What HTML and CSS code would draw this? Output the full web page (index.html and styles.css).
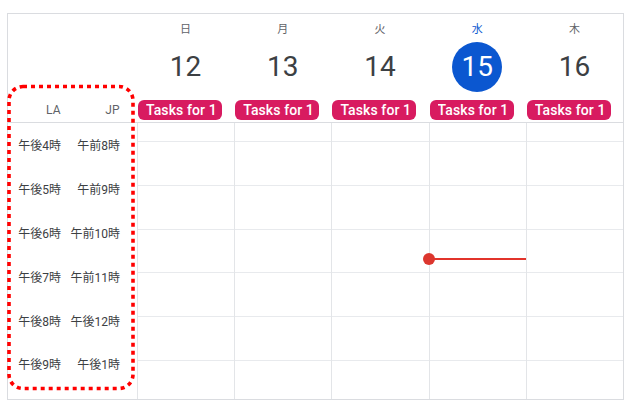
FILE: index.html
```html
<!DOCTYPE html>
<html lang="ja">
<head>
    <meta charset="UTF-8">
    <meta name="viewport" content="width=device-width, initial-scale=1.0">
    <title>Week view</title>
    <link rel="stylesheet" href="styles.css">
</head>
<body>
<div class="calendar">
    <!-- Day headers -->
    <div class="head">
        <div class="zones"><span>LA</span><span>JP</span></div>
        <div class="day">
            <span class="dow">日</span>
            <span class="date">12</span>
            <span class="chip"><span>Tasks for 10月12日</span></span>
        </div>
        <div class="day">
            <span class="dow">月</span>
            <span class="date">13</span>
            <span class="chip"><span>Tasks for 10月13日</span></span>
        </div>
        <div class="day">
            <span class="dow">火</span>
            <span class="date">14</span>
            <span class="chip"><span>Tasks for 10月14日</span></span>
        </div>
        <div class="day today">
            <span class="dow">水</span>
            <span class="date">15</span>
            <span class="chip"><span>Tasks for 10月15日</span></span>
        </div>
        <div class="day">
            <span class="dow">木</span>
            <span class="date">16</span>
            <span class="chip"><span>Tasks for 10月16日</span></span>
        </div>
    </div>

    <!-- Time grid -->
    <div class="grid">
        <div class="gutter">
            <div class="hour"><span>午後4時</span><span>午前8時</span></div>
            <div class="hour"><span>午後5時</span><span>午前9時</span></div>
            <div class="hour"><span>午後6時</span><span>午前10時</span></div>
            <div class="hour"><span>午後7時</span><span>午前11時</span></div>
            <div class="hour"><span>午後8時</span><span>午後12時</span></div>
            <div class="hour"><span>午後9時</span><span>午後1時</span></div>
        </div>
        <div class="col">
            <div class="slot first"></div><div class="slot"></div><div class="slot"></div>
            <div class="slot"></div><div class="slot"></div><div class="slot"></div>
        </div>
        <div class="col">
            <div class="slot first"></div><div class="slot"></div><div class="slot"></div>
            <div class="slot"></div><div class="slot"></div><div class="slot"></div>
        </div>
        <div class="col">
            <div class="slot first"></div><div class="slot"></div><div class="slot"></div>
            <div class="slot"></div><div class="slot"></div><div class="slot"></div>
        </div>
        <div class="col">
            <div class="slot first"></div><div class="slot"></div><div class="slot"></div>
            <div class="slot"></div><div class="slot"></div><div class="slot"></div>
            <div class="now"><span class="now-dot"></span></div>
        </div>
        <div class="col">
            <div class="slot first"></div><div class="slot"></div><div class="slot"></div>
            <div class="slot"></div><div class="slot"></div><div class="slot"></div>
        </div>
    </div>
</div>

<!-- Highlight around the time zone column -->
<svg class="highlight" width="134" height="312" viewBox="0 0 134 312">
    <rect x="4" y="4.5" width="124" height="302" rx="14" ry="14"
          fill="none" stroke="#ff0000" stroke-width="3.6" stroke-dasharray="4 4"/>
</svg>
</body>
</html>
```

FILE: styles.css
```css
body {
    margin: 0;
    background: #fff;
    font-family: Roboto, "Noto Sans CJK JP", sans-serif;
    color: #3c4043;
}
.calendar {
    box-sizing: border-box;
    width: 617px;
    height: 387px;
    margin: 13px 0 0 7px;
    border: 1px solid #dadce0;
    display: flex;
    flex-direction: column;
}
.head, .grid {
    display: grid;
    grid-template-columns: 129px repeat(5, 1fr);
}
.head {
    box-sizing: border-box;
    height: 109px;
    border-bottom: 1px solid #dadce0;
}
.zones, .hour {
    display: grid;
    grid-template-columns: 53px 59px;
    padding-right: 17px;
    text-align: right;
    font-size: 12px;
}
.zones {
    align-content: end;
    padding-bottom: 4px;
    line-height: 16px;
    color: #5f6368;
    letter-spacing: 0.3px;
}
.day {
    display: flex;
    flex-direction: column;
    align-items: center;
    padding-top: 6px;
}
.dow {
    font-family: "Noto Sans CJK JP", sans-serif;
    font-size: 11px;
    line-height: 16px;
    color: #5f6368;
}
.date {
    width: 50px;
    height: 50px;
    margin-top: 6px;
    border-radius: 50%;
    font-size: 28px;
    line-height: 50px;
    text-align: center;
    color: #3c4043;
}
.today .dow {
    color: #0b57d0;
}
.today .date {
    background: #0b57d0;
    color: #fff;
}
.chip {
    align-self: flex-start;
    box-sizing: border-box;
    width: 84px;
    height: 20px;
    margin: 8px 0 0 1px;
    padding: 0 6px 0 8px;
    border-radius: 6px;
    background: #d81b60;
    color: #fff;
    font-size: 14px;
    font-weight: 500;
    line-height: 20px;
    letter-spacing: 0.1px;
}
.chip span {
    display: block;
    overflow: hidden;
    white-space: nowrap;
}
.grid {
    flex: 1;
}
.hour {
    height: 43.8px;
    align-items: center;
    color: #3c4043;
}
.col {
    position: relative;
    border-left: 1px solid #e3e5e8;
}
.slot {
    box-sizing: border-box;
    height: 43.8px;
    border-bottom: 1px solid #e8eaed;
}
.slot.first {
    height: 19px;
}
.now {
    position: absolute;
    left: 0;
    right: 0;
    top: 135px;
    height: 2px;
    background: #e2342b;
}
.now-dot {
    position: absolute;
    left: -7px;
    top: -5px;
    width: 12px;
    height: 12px;
    border-radius: 50%;
    background: #dc362e;
}
.highlight {
    position: absolute;
    left: 5px;
    top: 82px;
    pointer-events: none;
}
```
